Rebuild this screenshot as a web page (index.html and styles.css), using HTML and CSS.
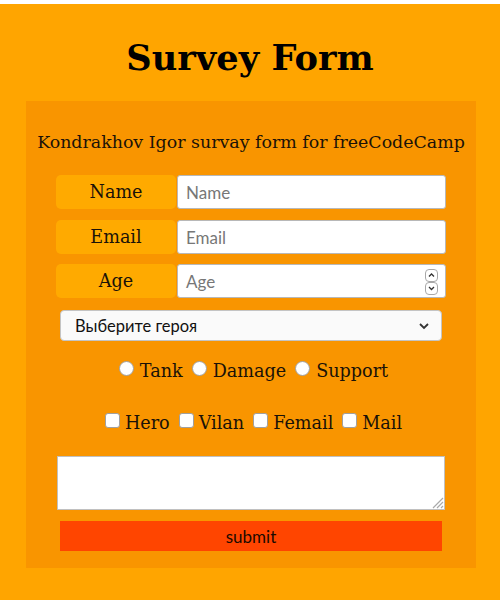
FILE: index.html
```html
<!DOCTYPE html>
<html lang="ru">
<head>
<meta charset="utf-8">
<title>Survey Form</title>
<link rel="stylesheet" href="styles.css">
</head>
<body>
<div class="page">
  <h1 class="title">Survey Form</h1>
  <form class="panel">
    <p class="subtitle">Kondrakhov Igor survay form for freeCodeCamp</p>
    <div class="row row-first">
      <label class="lbl" for="name">Name</label>
      <input class="field" id="name" type="text" placeholder="Name">
    </div>
    <div class="row row-second">
      <label class="lbl" for="email">Email</label>
      <input class="field" id="email" type="email" placeholder="Email">
    </div>
    <div class="row row-third">
      <label class="lbl" for="age">Age</label>
      <div class="field num">
        <span class="ph">Age</span>
        <span class="spin">
          <svg width="13" height="26" viewBox="0 0 13 26">
            <rect x="0.5" y="0.5" width="12" height="12" rx="3.5" fill="#fff" stroke="#a8a8a8"/>
            <rect x="0.5" y="13.5" width="12" height="12" rx="3.5" fill="#fff" stroke="#a8a8a8"/>
            <path d="M4 7.5 L6.5 5 L9 7.5" fill="none" stroke="#333" stroke-width="1.3"/>
            <path d="M4 18 L6.5 20.5 L9 18" fill="none" stroke="#333" stroke-width="1.3"/>
          </svg>
        </span>
      </div>
    </div>
    <div class="select">
      <span>Выберите героя</span>
      <svg width="12" height="8" viewBox="0 0 12 8"><path d="M2 2 L6 6 L10 2" fill="none" stroke="#333" stroke-width="1.8"/></svg>
    </div>
    <div class="choices radios">
      <label><span class="radio"></span>Tank</label>
      <label><span class="radio"></span>Damage</label>
      <label><span class="radio"></span>Support</label>
    </div>
    <div class="choices checks">
      <label><span class="check"></span>Hero</label>
      <label><span class="check"></span>Vilan</label>
      <label><span class="check"></span>Femail</label>
      <label><span class="check"></span>Mail</label>
    </div>
    <div class="area">
      <svg class="grip" width="14" height="14" viewBox="0 0 14 14"><path d="M13 3 L3 13 M13 7 L7 13 M13 11 L11 13" stroke="#aaa" stroke-width="1.2"/></svg>
    </div>
    <div class="submit">submit</div>
  </form>
</div>
</body>
</html>
```
FILE: styles.css
```css
html, body {
  margin: 0;
  padding: 0;
  background: #fff;
}
.page {
  margin-top: 4px;
  background: #ffa500;
  min-height: 596px;
  display: flex;
  flex-direction: column;
  align-items: center;
  font-family: "DejaVu Serif", serif;
}
.title {
  margin: 33px 0 0;
  height: 64px;
  font-size: 35.2px;
  line-height: 41px;
  font-weight: bold;
  color: #000;
}
.panel {
  width: 450px;
  margin-left: 2px;
  background: #f99500;
  display: flex;
  flex-direction: column;
  align-items: center;
  padding: 0 0 17px;
  box-sizing: border-box;
}
.subtitle {
  margin: 31px 0 0;
  font-size: 17.4px;
  line-height: 20px;
  color: #1a1208;
}
.row {
  display: flex;
  width: 390px;
  height: 34px;
}
.row-first { margin-top: 23px; }
.row-second { margin-top: 11px; }
.row-third { margin-top: 10px; }
.lbl {
  width: 120px;
  background: #ffaa00;
  border-radius: 5px;
  display: flex;
  align-items: center;
  justify-content: center;
  font-size: 17.6px;
  color: #1a1208;
}
.field {
  flex: 1;
  box-sizing: border-box;
  height: 34px;
  margin: 0 0 0 1px;
  border: 1px solid #b8b8b8;
  border-radius: 3px;
  background: #fff;
  padding: 0 8px;
  font-family: Lato, sans-serif;
  font-size: 17px;
  color: #222;
  outline: none;
}
.field::placeholder { color: #777; }
.num {
  display: flex;
  align-items: center;
  justify-content: space-between;
  padding-right: 7px;
}
.ph { color: #777; }
.spin { display: flex; margin-top: 2px; }
.select {
  box-sizing: border-box;
  width: 382px;
  height: 31px;
  margin-top: 12px;
  border: 1px solid #c4c4c4;
  border-radius: 4px;
  background: #fafafa;
  display: flex;
  align-items: center;
  justify-content: space-between;
  padding: 0 11px 0 14px;
  font-family: Lato, sans-serif;
  font-size: 16.5px;
  color: #111;
}
.choices {
  display: flex;
  justify-content: center;
  font-size: 17.6px;
  line-height: 22px;
  color: #1a1208;
}
.choices label { display: flex; align-items: center; margin-right: 4px; }
.choices label:last-child { margin-right: 0; }
.radios { margin-top: 19px; }
.checks { margin-top: 30px; }
.radio {
  width: 13px;
  height: 13px;
  border: 1px solid #a0a0a0;
  border-radius: 50%;
  background: #fff;
  margin: -6px 6px 0 5px;
}
.check {
  width: 13px;
  height: 13px;
  border: 1px solid #a0a0a0;
  border-radius: 3px;
  background: #fff;
  margin: -6px 5px 0 5px;
}
.area {
  box-sizing: border-box;
  width: 388px;
  height: 54px;
  margin-top: 22px;
  border: 1px solid #c0c0c0;
  background: #fff;
  position: relative;
}
.grip { position: absolute; right: 0; bottom: 0; }
.submit {
  width: 382px;
  height: 30px;
  margin-top: 11px;
  background: #ff4500;
  display: flex;
  align-items: center;
  justify-content: center;
  font-family: Lato, sans-serif;
  font-size: 17px;
  color: #1a0a00;
}
```
